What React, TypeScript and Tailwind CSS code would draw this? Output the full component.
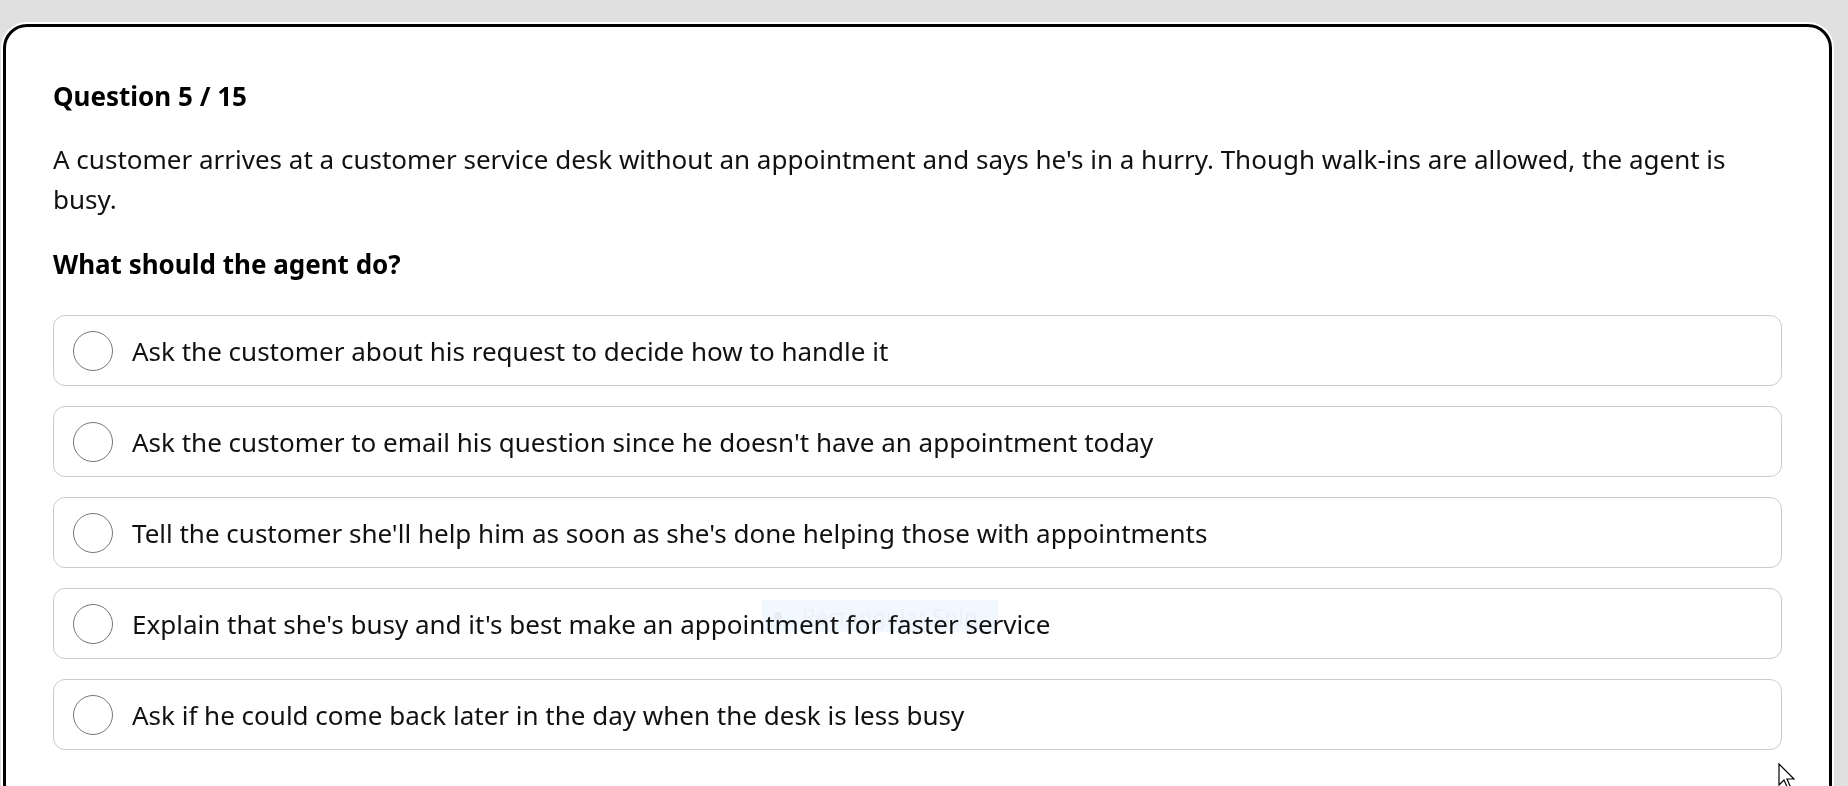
import { useState } from "react";

const options = [
  "Ask the customer about his request to decide how to handle it",
  "Ask the customer to email his question since he doesn't have an appointment today",
  "Tell the customer she'll help him as soon as she's done helping those with appointments",
  "Explain that she's busy and it's best make an appointment for faster service",
  "Ask if he could come back later in the day when the desk is less busy",
];

function Option({ label, selected, onSelect }: { label: string; selected: boolean; onSelect: () => void }) {
  return (
    <button
      onClick={onSelect}
      className="flex h-[71px] w-full items-center gap-[19px] rounded-[12px] border-[1.5px] border-[#cbcbcb] bg-white pl-[19px] text-left"
    >
      <span className="flex h-[40px] w-[40px] shrink-0 items-center justify-center rounded-full border-[1.5px] border-[#767676]">
        {selected && <span className="h-[22px] w-[22px] rounded-full bg-[#1a1a1a]" />}
      </span>
      <span className="text-[26px] leading-[34px] text-[#111]">{label}</span>
    </button>
  );
}

export default function App() {
  const [picked, setPicked] = useState<number | null>(null);

  return (
    <div
      className="relative h-[786px] w-[1848px] overflow-hidden bg-[#e0e0e0] pl-[3px] pt-[24px]"
      style={{ fontFamily: '"Noto Sans", "Open Sans", sans-serif' }}
    >
      <div className="h-[800px] w-[1829px] rounded-[24px] border-[3px] border-black bg-white px-[47px] pt-[52px] shadow-[0_0_0_2px_#ffffff]">
        <h2 className="text-[26px] font-bold leading-[34px] text-black">Question 5 / 15</h2>

        <p className="mt-[26px] text-[26px] leading-[40px] text-[#111]">
          A customer arrives at a customer service desk without an appointment and says he's in a hurry. Though
          walk-ins are allowed, the agent is busy.
        </p>

        <p className="mt-[28px] text-[26px] font-bold leading-[34px] text-black">What should the agent do?</p>

        {/* answers */}
        <div className="mt-[34px] flex flex-col gap-[20px]">
          {options.map((o, i) => (
            <Option key={i} label={o} selected={picked === i} onSelect={() => setPicked(i)} />
          ))}
        </div>
      </div>

      {/* snipping tool hint left over on the screen */}
      <div className="pointer-events-none absolute left-[762px] top-[600px] flex h-[32px] w-[236px] items-center gap-[20px] bg-[#f2f8ff] pl-[12px] mix-blend-multiply">
        <span className="h-[8px] w-[8px] rounded-full bg-[#e6ebf0]" />
        <span className="text-[22px] text-[#eceff3]">Rectangular Snip</span>
      </div>

      {/* mouse pointer */}
      <svg className="pointer-events-none absolute left-[1778px] top-[763px]" width="20" height="28" viewBox="0 0 20 28">
        <path d="M1 1 L1 22 L6 17 L10 26 L13 25 L9 16 L16 16 Z" fill="#ffffff" stroke="#000000" strokeWidth="1.2" />
      </svg>
    </div>
  );
}
